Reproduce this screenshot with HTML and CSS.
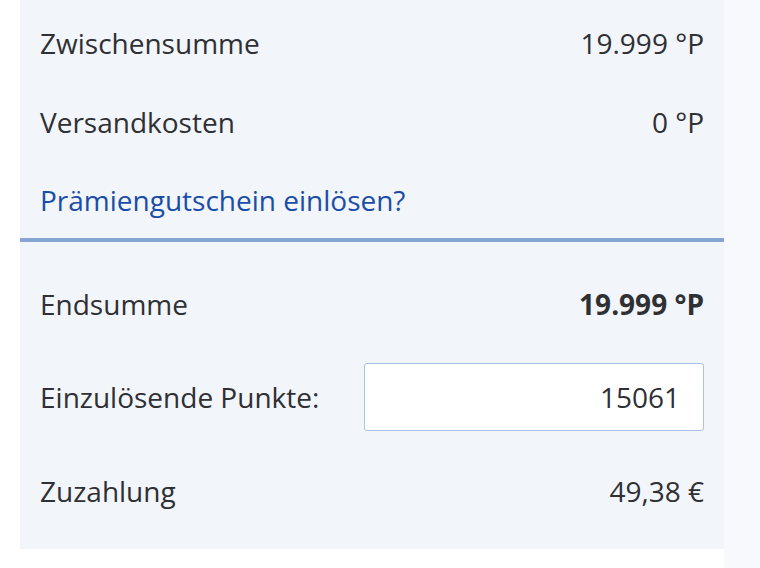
FILE: index.html
```html
<!DOCTYPE html>
<html lang="de">
<head>
<meta charset="utf-8">
<title>Warenkorb</title>
<link rel="stylesheet" href="styles.css">
</head>
<body>
<div class="page">
  <main class="main">
    <section class="summary">
      <div class="top">
        <div class="row"><span>Zwischensumme</span><span>19.999 °P</span></div>
        <div class="row"><span>Versandkosten</span><span>0 °P</span></div>
        <a class="voucher" href="#">Prämiengutschein einlösen?</a>
      </div>
      <div class="divider"></div>
      <div class="bottom">
        <div class="row total"><span>Endsumme</span><span class="strong">19.999 °P</span></div>
        <div class="row points"><label for="pts">Einzulösende Punkte:</label><input id="pts" class="points-input" type="text" value="15061"></div>
        <div class="row"><span>Zuzahlung</span><span>49,38 €</span></div>
      </div>
    </section>
  </main>
  <aside class="side"></aside>
</div>
</body>
</html>
```
FILE: styles.css
```css
* { box-sizing: border-box; }
html, body { margin: 0; padding: 0; background: #ffffff; }
body {
  font-family: "Open Sans", "Noto Sans", sans-serif;
  font-size: 28px;
  line-height: 40px;
  color: #2f3033;
}
.page { display: flex; height: 568px; }
.main { width: 724px; padding-left: 20px; }
.side { flex: 1; background: #f7f9fd; }
.summary {
  width: 704px;
  height: 549px;
  background: #f2f5fa;
  display: flex;
  flex-direction: column;
}
.top {
  padding: 23px 20px 0;
  display: flex;
  flex-direction: column;
  gap: 39px;
}
.row {
  display: flex;
  justify-content: space-between;
  align-items: center;
}
.voucher {
  color: #1a4ea6;
  text-decoration: none;
  margin-top: -1px;
}
.divider {
  margin-top: 18px;
  height: 4px;
  background: #87a3cf;
}
.bottom {
  padding: 42px 20px 0;
  display: flex;
  flex-direction: column;
}
.strong { font-weight: 700; }
.points { margin-top: 39px; }
.points + .row { margin-top: 40px; }
.points-input {
  width: 340px;
  height: 68px;
  border: 1px solid #a9c1e4;
  border-radius: 3px;
  background: #ffffff;
  font-family: inherit;
  font-size: 28px;
  color: #2f3033;
  text-align: right;
  padding: 0 23px 0 12px;
  margin: 0;
  outline: none;
}
label { cursor: default; }
```
